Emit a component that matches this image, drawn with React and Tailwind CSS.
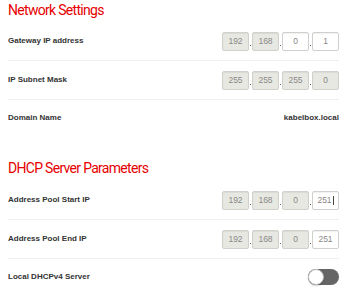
const network = [
  { label: 'Gateway IP address', ip: ['192', '168', '0', '1'], editable: [false, false, true, true] },
  { label: 'IP Subnet Mask', ip: ['255', '255', '255', '0'], editable: [false, false, false, false] },
]

function IpField({ parts, editable, caret }) {
  return (
    <div className="flex items-stretch">
      {parts.map((p, i) => (
        <div key={i} className="flex items-stretch">
          {i > 0 && (
            <div className="flex w-[3px] items-end justify-center pb-[5px]">
              <div className="h-px w-px bg-[#666]" />
            </div>
          )}
          <div
            className={
              'flex h-[19px] w-[27px] items-center justify-center rounded-[2px] border border-[#d0d0cc] text-[8.5px] text-[#888] shadow-[inset_0_1px_1px_rgba(0,0,0,0.06)] ' +
              (editable[i] ? 'bg-white' : 'bg-[#e8e8e2]')
            }
          >
            {p}
            {caret && i === 3 && <span className="ml-px h-[9px] w-px bg-[#444]" />}
          </div>
        </div>
      ))}
    </div>
  )
}

function Row({ label, children, border = true, h = 'h-[39px]' }) {
  return (
    <div className={`flex ${h} items-center justify-between ${border ? 'border-b border-[#efefef]' : ''}`}>
      <span className="text-[8px] font-bold text-[#333]">{label}</span>
      {children}
    </div>
  )
}

export default function App() {
  return (
    <div className="h-[300px] w-[350px] overflow-hidden bg-white pl-2 pr-[11px] font-['Liberation_Sans',Arial,sans-serif]">
      <h2 className="h-[22px] pt-px font-['Roboto',sans-serif] text-[14px] leading-[18px] tracking-[-0.7px] text-[#e60000]">
        Network Settings
      </h2>
      {network.map((r) => (
        <Row key={r.label} label={r.label}>
          <IpField parts={r.ip} editable={r.editable} />
        </Row>
      ))}
      <Row label="Domain Name" border={false} h="h-[36px]">
        <span className="text-[8px] font-bold text-[#333]">kabelbox.local</span>
      </Row>

      <h2 className="h-[45px] pt-[23px] font-['Roboto',sans-serif] text-[14px] leading-[18px] tracking-[-0.7px] text-[#e60000]">
        DHCP Server Parameters
      </h2>
      <Row label="Address Pool Start IP">
        <IpField parts={['192', '168', '0', '251']} editable={[false, false, false, true]} caret />
      </Row>
      <Row label="Address Pool End IP">
        <IpField parts={['192', '168', '0', '251']} editable={[false, false, false, true]} />
      </Row>
      <Row label="Local DHCPv4 Server" border={false} h="h-[35px]">
        <div className="relative h-[16px] w-[31px] rounded-full bg-[#666]">
          <div className="absolute left-0 top-0 h-[16px] w-[16px] rounded-full border border-[#bdbdbd] bg-white shadow-[0_1px_2px_rgba(0,0,0,0.2)]" />
        </div>
      </Row>
    </div>
  )
}
